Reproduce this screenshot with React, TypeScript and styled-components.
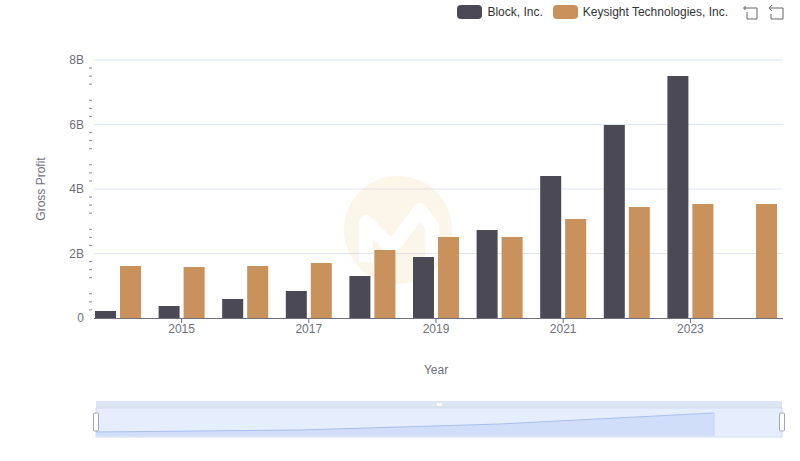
import React from "react";
import styled, { createGlobalStyle } from "styled-components";

const GlobalStyle = createGlobalStyle`
  body { margin: 0; background: #fff; font-family: "Liberation Sans", Arial, sans-serif; }
`;

const block = [7, 12, 19, 27, 42, 61, 88, 142, 193, 242, 0];
const keysight = [52, 51, 52, 55, 68, 81, 81, 99, 111, 114, 114];
const BASE = 318;
const center = (i: number) => 118 + 63.6 * i;

const Page = styled.div`
  position: relative;
  width: 800px;
  height: 461px;
  overflow: hidden;
`;

const Legend = styled.div`
  position: absolute;
  top: 4px;
  right: 16px;
  display: flex;
  align-items: center;
  gap: 10px;
  font-size: 12px;
  color: #333;
`;

const LegendItem = styled.div`
  display: flex;
  align-items: center;
  gap: 5px;
`;

const Swatch = styled.span<{ $color: string }>`
  width: 25px;
  height: 14px;
  border-radius: 4px;
  background: ${(p) => p.$color};
`;

const Tools = styled.div`
  display: flex;
  gap: 10px;
  margin-left: 4px;
`;

const Chart = styled.svg`
  display: block;
`;

const AxisText = styled.text`
  font-size: 12px;
  fill: #6e7079;
  font-family: "Liberation Sans", Arial, sans-serif;
`;

export default function App() {
  const minor: number[] = [];
  for (let v = 0; v <= 32; v++) if (v % 4 !== 0) minor.push(BASE - v * 8.0625);
  return (
    <Page>
      <GlobalStyle />
      <Chart width={800} height={461}>
        {[60, 124.5, 189, 253.5].map((y) => (
          <line key={y} x1={94} x2={783} y1={y} y2={y} stroke="#e0e6f1" />
        ))}
        {minor.map((y) => (
          <line key={y} x1={89} x2={92} y1={y} y2={y} stroke="#6e7079" strokeWidth={0.8} />
        ))}
        {["0", "2B", "4B", "6B", "8B"].map((t, i) => (
          <AxisText key={t} x={84} y={BASE - i * 64.5 + 4} textAnchor="end">{t}</AxisText>
        ))}
        <g opacity={0.1}>
          <circle cx={398} cy={230} r={54} fill="#e8a33d" />
          <path d="M366 262 L366 222 L392 248 L420 210 L432 226 L432 262" fill="none" stroke="#fff" strokeWidth={14} strokeLinejoin="round" />
        </g>
        {block.map((h, i) =>
          h ? <rect key={"b" + i} x={center(i) - 23} y={BASE - h} width={21} height={h} fill="#4a4955" /> : null
        )}
        {keysight.map((h, i) => (
          <rect key={"k" + i} x={center(i) + 2} y={BASE - h} width={21} height={h} fill="#c9915c" />
        ))}
        <line x1={94} x2={783} y1={BASE + 0.5} y2={BASE + 0.5} stroke="#6e7079" />
        {[2015, 2017, 2019, 2021, 2023].map((yr, j) => {
          const x = center(1 + j * 2);
          return (
            <g key={yr}>
              <line x1={x} x2={x} y1={BASE} y2={BASE + 5} stroke="#6e7079" />
              <AxisText x={x} y={BASE + 15} textAnchor="middle">{yr}</AxisText>
            </g>
          );
        })}
        <AxisText x={436} y={374} textAnchor="middle">Year</AxisText>
        <AxisText x={45} y={189} textAnchor="middle" transform="rotate(-90 45 189)">Gross Profit</AxisText>
        {/* data zoom slider */}
        <rect x={96} y={401} width={686} height={7} fill="#dde4f2" />
        <rect x={96} y={408} width={686} height={29} fill="#e6edfc" stroke="#d2dbee" />
        <path d="M96 432 L300 430 L500 424 L714 413 L714 436 L96 436 Z" fill="#d1defa" />
        <path d="M96 432 L300 430 L500 424 L714 413" fill="none" stroke="#a9bff0" />
        <line x1={714} x2={714} y1={413} y2={436} stroke="#c4d3f5" />
        <rect x={437} y={403} width={5} height={3} fill="#fff" />
        <rect x={93.5} y={413} width={5} height={18} fill="#fff" stroke="#a0a6b5" rx={1} />
        <rect x={779.5} y={413} width={5} height={18} fill="#fff" stroke="#a0a6b5" rx={1} />
      </Chart>
      <Legend>
        <LegendItem><Swatch $color="#4a4955" />Block, Inc.</LegendItem>
        <LegendItem><Swatch $color="#c9915c" />Keysight Technologies, Inc.</LegendItem>
        <Tools>
          <svg width="16" height="16" viewBox="0 0 16 16" fill="none" stroke="#666">
            <path d="M1 4 H5 M3 2 V6 M5 4 H15 V15 H5 V8" />
          </svg>
          <svg width="16" height="16" viewBox="0 0 16 16" fill="none" stroke="#666">
            <path d="M4 1 L1 4 L4 7 M1 4 H15 V15 H3 V10" />
          </svg>
        </Tools>
      </Legend>
    </Page>
  );
}
